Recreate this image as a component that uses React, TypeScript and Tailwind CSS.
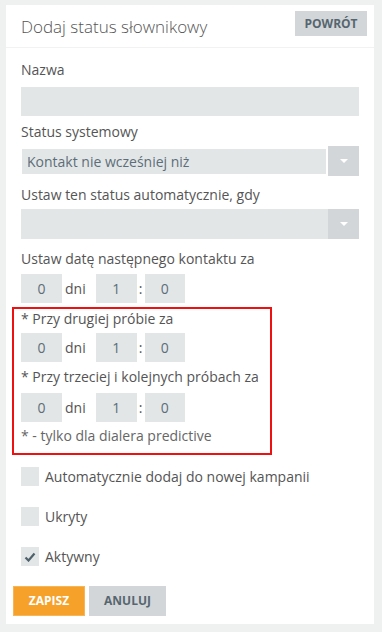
import React from "react";

const font = { fontFamily: '"Open Sans", "Liberation Sans", sans-serif' };

const Caret = () => (
  <svg width="10" height="6" viewBox="0 0 10 6">
    <path d="M1 1 L9 1 L5 5 Z" fill="#ffffff" />
  </svg>
);

const TimeRow = ({ days, hours, minutes }: { days: string; hours: string; minutes: string }) => (
  <div className="flex items-center text-[14px] text-[#5b6e79]">
    <div className="w-[41px] h-[29px] bg-[#e3e6e7] flex items-center justify-center">{days}</div>
    <span className="pl-[3px] pr-[10px] text-[#555]">dni</span>
    <div className="w-[41px] h-[29px] bg-[#e3e6e7] flex items-center justify-center">{hours}</div>
    <span className="w-[8px] text-center text-[#555]">:</span>
    <div className="w-[40px] h-[29px] bg-[#e3e6e7] flex items-center justify-center">{minutes}</div>
  </div>
);

const Checkbox = ({ label, checked }: { label: string; checked?: boolean }) => (
  <label className="flex items-center gap-[6px] h-[19px]">
    <span className="w-[18px] h-[19px] bg-[#e3e6e7] flex items-center justify-center">
      {checked && (
        <svg width="12" height="10" viewBox="0 0 12 10">
          <path d="M1.5 5.5 L4.5 8.5 L10.5 1.5" stroke="#4f616b" strokeWidth="2.2" fill="none" />
        </svg>
      )}
    </span>
    <span className="text-[14px] text-[#555] leading-[20px]">{label}</span>
  </label>
);

export default function App() {
  return (
    <div className="min-h-screen bg-[#eff0f0] pt-[5px] pl-[6px]" style={font}>
      <div className="w-[368px] bg-white">
        <div className="h-[43px] border-b border-[#f2f2f2] flex justify-between items-start pl-[15px] pr-[7px] pt-[6px]">
          <h1 className="text-[17px] font-light text-[#555] leading-[24px] pt-[4px]">Dodaj status słownikowy</h1>
          <button className="w-[72px] h-[25px] bg-[#d3d6d8] text-[#566670] text-[12px] font-bold">POWRÓT</button>
        </div>

        <div className="px-[15px] pt-[12px] pb-[8px] flex flex-col">
          <div className="text-[14px] font-medium text-[#555] leading-[20px]">Nazwa</div>
          <div className="mt-[7px] h-[29px] bg-[#e3e6e7]" />

          <div className="mt-[6px] text-[14px] font-medium text-[#555] leading-[20px]">Status systemowy</div>
          <div className="mt-[4px] flex items-center">
            <div className="flex-1 h-[25px] bg-[#e3e6e7] ml-[1px] mr-[2px] pl-[5px] flex items-center text-[14px] text-[#5b6e79]">
              Kontakt nie wcześniej niż
            </div>
            <div className="w-[31px] h-[30px] bg-[#d3d6d8] flex items-center justify-center">
              <Caret />
            </div>
          </div>

          <div className="mt-[9px] text-[14px] font-medium text-[#555] leading-[20px]">Ustaw ten status automatycznie, gdy</div>
          <div className="mt-[4px] flex h-[30px]">
            <div className="flex-1 bg-[#e3e6e7]" />
            <div className="w-[31px] bg-[#d3d6d8] flex items-center justify-center">
              <Caret />
            </div>
          </div>

          <div className="mt-[10px] text-[14px] font-medium text-[#555] leading-[20px]">Ustaw datę następnego kontaktu za</div>
          <div className="mt-[5px]">
            <TimeRow days="0" hours="1" minutes="0" />
          </div>

          <div className="mt-[4px] ml-[-9px] w-[260px] border-2 border-[#ee1111] pl-[7px] pb-[7px] flex flex-col">
            <div className="text-[14px] font-medium text-[#555] leading-[20px]">* Przy drugiej próbie za</div>
            <div className="mt-[4px]">
              <TimeRow days="0" hours="1" minutes="0" />
            </div>
            <div className="mt-[5px] text-[14px] font-medium text-[#555] leading-[20px]">* Przy trzeciej i kolejnych próbach za</div>
            <div className="mt-[6px]">
              <TimeRow days="0" hours="1" minutes="0" />
            </div>
            <div className="mt-[4px] text-[14px] text-[#666] leading-[20px]">* - tylko dla dialera predictive</div>
          </div>

          <div className="mt-[12px] flex flex-col gap-[21px]">
            <Checkbox label="Automatycznie dodaj do nowej kampanii" />
            <Checkbox label="Ukryty" />
            <Checkbox label="Aktywny" checked />
          </div>

          <div className="mt-[20px] ml-[-8px] flex gap-[4px]">
            <button className="w-[72px] h-[30px] bg-[#f6a12a] border border-[#f8b455] text-white text-[12px] font-bold">ZAPISZ</button>
            <button className="w-[77px] h-[30px] bg-[#d3d6d8] text-[#566670] text-[12px] font-bold">ANULUJ</button>
          </div>
        </div>
      </div>
    </div>
  );
}
